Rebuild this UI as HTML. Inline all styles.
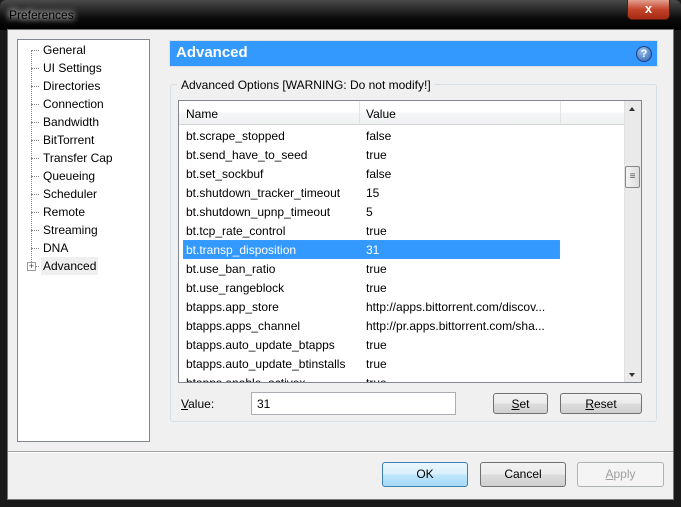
<!DOCTYPE html>
<html><head><style>
*{margin:0;padding:0;box-sizing:border-box}
body{width:681px;height:507px;overflow:hidden;background:#1a1a1a;font-family:"Liberation Sans",sans-serif;font-size:12px;color:#000;position:relative}
.a{position:absolute}
.title{left:0;top:0;width:681px;height:30px;background:linear-gradient(180deg,#4a4a4a 0%,#0c0c0c 60%,#000 100%);border-radius:6px 6px 0 0}
.client{left:7px;top:29px;width:667px;height:471px;background:#f0f0f0;border:1px solid #777}
.tree{left:17px;top:39px;width:133px;height:403px;background:#fff;border:1px solid #828790}
.ti{position:absolute;left:25px;height:16px;line-height:16px}
.dot{position:absolute;left:13px;width:8px;border-top:1px dotted #888}
.row{position:absolute;left:0;width:380px;height:19px;line-height:19px}
.row span{position:absolute}
.btn{position:absolute;border:1px solid #707070;border-radius:3px;background:linear-gradient(#f2f2f2 0%,#ebebeb 50%,#dddddd 51%,#cfcfcf 100%);text-align:center;line-height:20px}
</style></head><body>
<div class="a title"></div>
<div class="a" style="left:9px;top:8px;color:#000;font-size:12px;text-shadow:0 0 6px #fff,0 0 8px #fff">Preferences</div>
<div class="a" style="left:627px;top:0;width:43px;height:20px;border:1px solid #5a1a10;border-top:none;border-radius:0 0 5px 5px;background:linear-gradient(#e3a08f,#c4432a 50%,#a52a14);color:#fff;font-weight:bold;text-align:center;line-height:18px;font-size:13px">x</div>
<div class="a client"></div>
<div class="a tree">
<div class="a" style="left:13px;top:10px;height:218px;border-left:1px dotted #888"></div>
<div class="dot" style="top:10px"></div><div class="ti" style="top:2px">General</div>
<div class="dot" style="top:28px"></div><div class="ti" style="top:20px">UI Settings</div>
<div class="dot" style="top:46px"></div><div class="ti" style="top:38px">Directories</div>
<div class="dot" style="top:64px"></div><div class="ti" style="top:56px">Connection</div>
<div class="dot" style="top:82px"></div><div class="ti" style="top:74px">Bandwidth</div>
<div class="dot" style="top:100px"></div><div class="ti" style="top:92px">BitTorrent</div>
<div class="dot" style="top:118px"></div><div class="ti" style="top:110px">Transfer Cap</div>
<div class="dot" style="top:136px"></div><div class="ti" style="top:128px">Queueing</div>
<div class="dot" style="top:154px"></div><div class="ti" style="top:146px">Scheduler</div>
<div class="dot" style="top:172px"></div><div class="ti" style="top:164px">Remote</div>
<div class="dot" style="top:190px"></div><div class="ti" style="top:182px">Streaming</div>
<div class="dot" style="top:208px"></div><div class="ti" style="top:200px">DNA</div>
<div class="dot" style="top:226px"></div>
<div class="a" style="left:9px;top:222px;width:9px;height:9px;border:1px solid #999;background:#fff;font-size:9px;line-height:7px;text-align:center;color:#333">+</div>
<div class="ti" style="top:217px;left:23px;padding:0 2px;background:#efefef;height:18px;line-height:18px">Advanced</div>
</div>
<div class="a" style="left:169px;top:40px;width:489px;height:27px;background:#3399ff;border:1px solid #e0e0e0"></div>
<div class="a" style="left:176px;top:44px;color:#fff;font-weight:bold;font-size:15px">Advanced</div>
<div class="a" style="left:636px;top:46px;width:16px;height:16px;border-radius:50%;background:radial-gradient(circle at 40% 30%,#9bc3f0,#2d5fb0);border:1px solid #1d3f80;color:#fff;font-size:11px;font-weight:bold;text-align:center;line-height:14px">?</div>
<div class="a" style="left:170px;top:84px;width:487px;height:338px;border:1px solid #d5dfe5;border-radius:3px"></div>
<div class="a" style="left:177px;top:78px;background:#f0f0f0;padding:0 4px">Advanced Options [WARNING: Do not modify!]</div>
<div class="a" style="left:178px;top:100px;width:464px;height:283px;border:1px solid #828790;background:#fff;overflow:hidden">
<div class="a" style="left:0;top:0;width:445px;height:24px;background:linear-gradient(#fff 0%,#fff 50%,#f5f6f7 51%,#f0f1f2 100%);border-bottom:1px solid #d5d5d5"></div>
<div class="a" style="left:180px;top:0;height:24px;border-left:1px solid #e3e3e3"></div>
<div class="a" style="left:381px;top:0;height:24px;border-left:1px solid #e3e3e3"></div>
<div class="a" style="left:7px;top:6px">Name</div>
<div class="a" style="left:187px;top:6px">Value</div>
<div class="a" style="left:4px;top:139px;width:377px;height:19px;background:#3399ff;border:1px dotted #c08040"></div>
<div class="a" style="left:3px;top:26px;width:440px;color:#000">
<div class="row" style="top:0"><span style="left:4px">bt.scrape_stopped</span><span style="left:184px">false</span></div>
<div class="row" style="top:19px"><span style="left:4px">bt.send_have_to_seed</span><span style="left:184px">true</span></div>
<div class="row" style="top:38px"><span style="left:4px">bt.set_sockbuf</span><span style="left:184px">false</span></div>
<div class="row" style="top:57px"><span style="left:4px">bt.shutdown_tracker_timeout</span><span style="left:184px">15</span></div>
<div class="row" style="top:76px"><span style="left:4px">bt.shutdown_upnp_timeout</span><span style="left:184px">5</span></div>
<div class="row" style="top:95px"><span style="left:4px">bt.tcp_rate_control</span><span style="left:184px">true</span></div>
<div class="row" style="top:114px;color:#fff"><span style="left:4px">bt.transp_disposition</span><span style="left:184px">31</span></div>
<div class="row" style="top:133px"><span style="left:4px">bt.use_ban_ratio</span><span style="left:184px">true</span></div>
<div class="row" style="top:152px"><span style="left:4px">bt.use_rangeblock</span><span style="left:184px">true</span></div>
<div class="row" style="top:171px"><span style="left:4px">btapps.app_store</span><span style="left:184px">http://apps.bittorrent.com/discov...</span></div>
<div class="row" style="top:190px"><span style="left:4px">btapps.apps_channel</span><span style="left:184px">http://pr.apps.bittorrent.com/sha...</span></div>
<div class="row" style="top:209px"><span style="left:4px">btapps.auto_update_btapps</span><span style="left:184px">true</span></div>
<div class="row" style="top:228px"><span style="left:4px">btapps.auto_update_btinstalls</span><span style="left:184px">true</span></div>
<div class="row" style="top:247px"><span style="left:4px">btapps.enable_activex</span><span style="left:184px">true</span></div>
</div>
<div class="a" style="left:445px;top:0;width:17px;height:281px;background:#eaeaea;border-left:1px solid #e0e0e0"></div>
<div class="a" style="left:450px;top:6px;width:0;height:0;border:3.5px solid transparent;border-bottom:4px solid #333;border-top:none"></div>
<div class="a" style="left:450px;top:272px;width:0;height:0;border:3.5px solid transparent;border-top:4px solid #333;border-bottom:none"></div>
<div class="a" style="left:446px;top:65px;width:15px;height:22px;border:1px solid #888;border-radius:2px;background:linear-gradient(90deg,#f4f4f4,#dcdcdc);font-size:10px;line-height:20px;text-align:center;color:#555">≡</div>
</div>
<div class="a" style="left:181px;top:397px"><u>V</u>alue:</div>
<div class="a" style="left:251px;top:392px;width:205px;height:23px;background:#fff;border:1px solid #abadb3;padding:4px 5px">31</div>
<div class="btn" style="left:493px;top:393px;width:55px;height:21px;line-height:21px"><u>S</u>et</div>
<div class="btn" style="left:560px;top:393px;width:82px;height:21px;line-height:21px"><u>R</u>eset</div>
<div class="a" style="left:8px;top:451px;width:665px;border-top:1px solid #a0a0a0;border-bottom:1px solid #fff"></div>
<div class="btn" style="left:382px;top:462px;width:86px;height:25px;line-height:23px;border-color:#3c7fb1;background:linear-gradient(#eaf6fd 0%,#d9f0fc 50%,#bee6fd 51%,#a7d9f5 100%)">OK</div>
<div class="btn" style="left:480px;top:462px;width:86px;height:25px;line-height:23px">Cancel</div>
<div class="btn" style="left:577px;top:462px;width:87px;height:25px;line-height:23px;border-color:#adb2b5;background:#f4f4f4;color:#a0a0a0"><u>A</u>pply</div>
</body></html>
